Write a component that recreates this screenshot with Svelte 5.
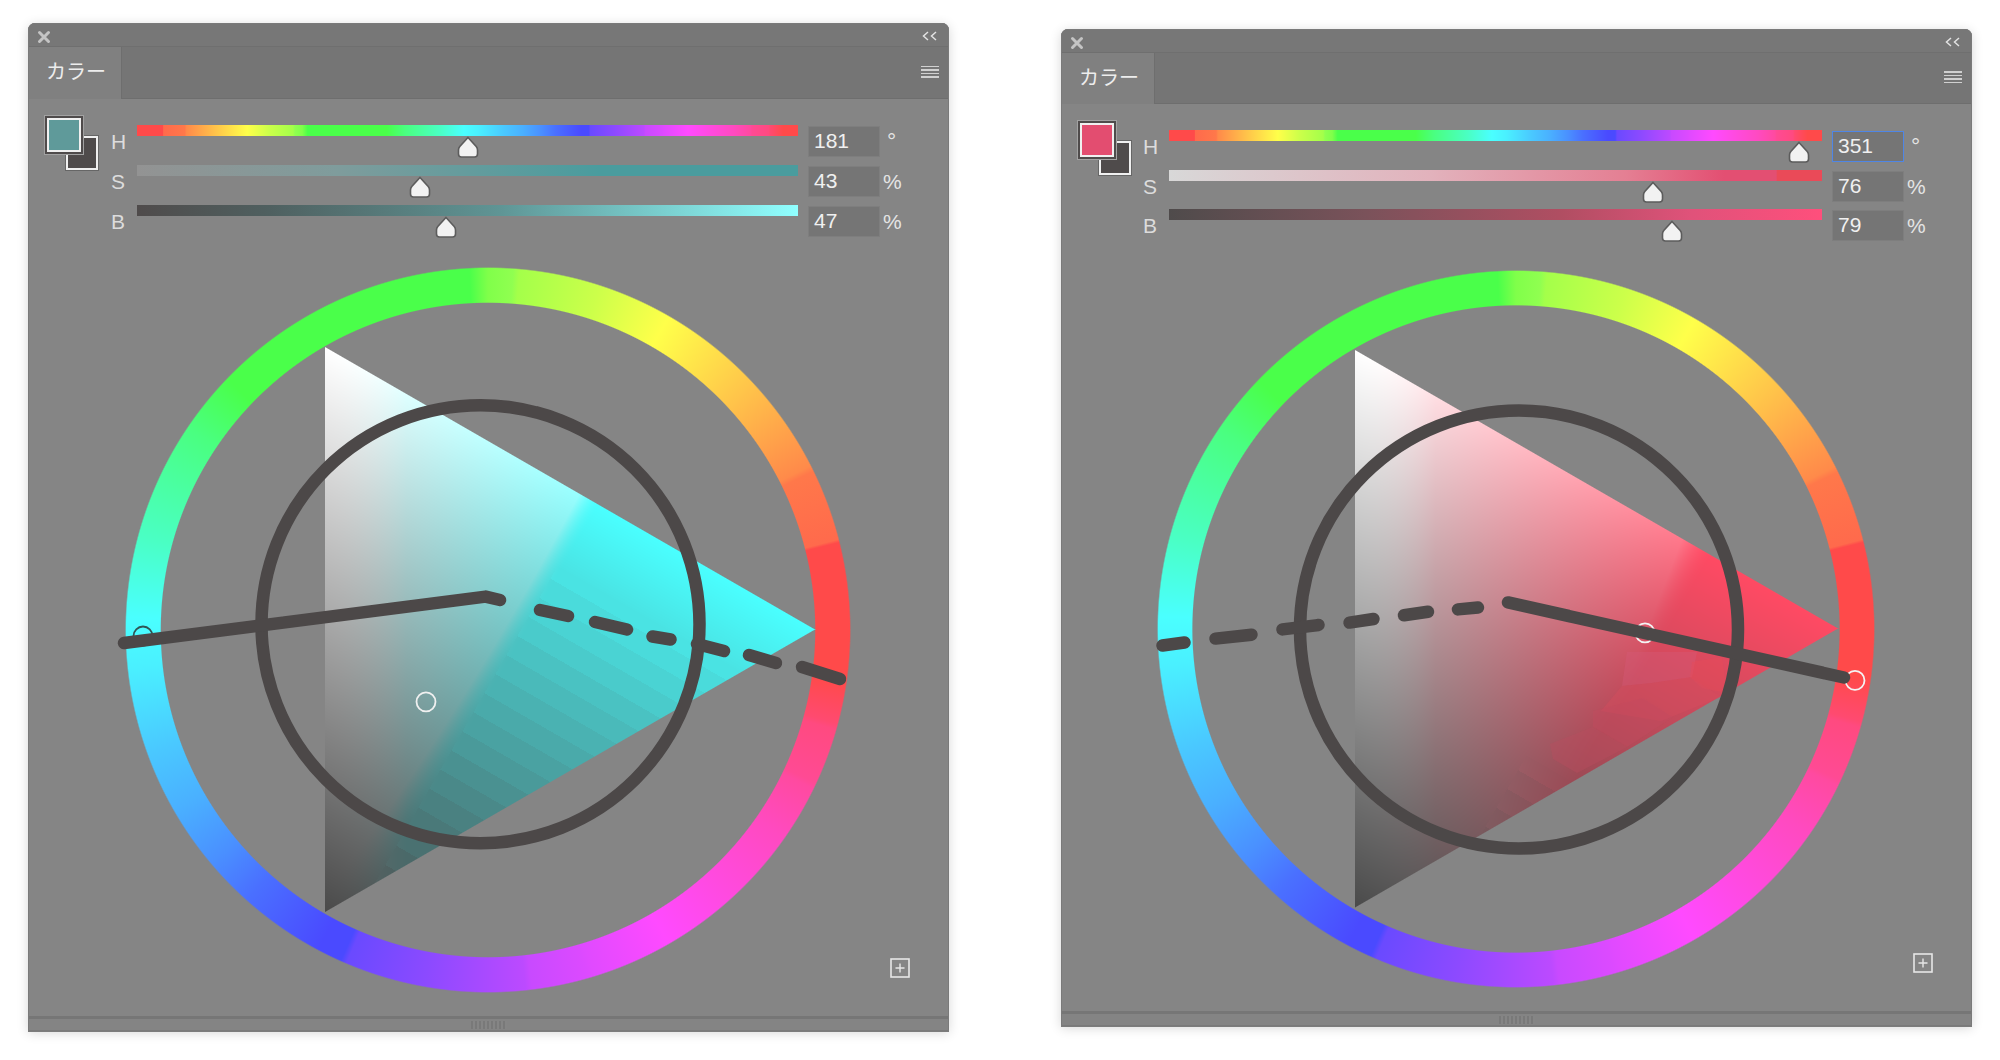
<script lang="ts">
	interface Slider {
		label: string;
		value: string;
		unit: string;
		gradient: string;
		thumb: number; // thumb centre, px from track start
		focused?: boolean;
	}

	interface Panel {
		width: number;
		height: number;
		marginTop: number;
		marginLeft: number;
		tabHeight: number;
		trackWidth: number;
		sliderLeft: number;
		rowGap: number;
		swatch: string;
		sliders: Slider[];
		// wheel coordinates are relative to the panel
		cx: number;
		cy: number;
		r: number;
		hue: number[]; // channel share of the pure hue, 0..1
		stripeFrom: number;
		satFrom: number;
		satTo: number;
		tri: number[][];
		cCx: number;
		cCy: number;
		cR: number;
		solid: number[][];
		dashes: number[][];
		dots: { x: number; y: number; color: string }[];
		patches: { points: string; color: string; opacity: number }[];
	}

	const WHEEL_TOP = 238;

	// hue position -> color, read off the reference wheel (it's stepped)
	const HUE_STOPS: [number, string][] = [
		[-8, '#ff4a4a'], [14, '#ff4a4a'], [14.5, '#ff6a4c'], [26, '#ff784a'], [27, '#ff8a4a'],
		[43, '#ffc44a'], [60, '#ffff4a'], [72, '#ccff4a'], [85, '#a4ff4a'], [86, '#90ff50'],
		[90, '#80ff4a'], [93, '#4aff4a'], [136, '#4aff4a'], [146, '#4aff80'], [165, '#4affc4'],
		[178, '#4affff'], [186, '#4af0ff'], [200, '#4ac8ff'], [210, '#4ab0ff'], [220, '#4a90ff'],
		[228, '#4a70ff'], [242, '#4a4aff'], [246, '#4a4aff'], [247, '#6a4aff'], [260, '#8c4aff'],
		[276, '#bc4aff'], [277, '#c84aff'], [286, '#dc4aff'], [287, '#e04aff'], [300, '#ff4aff'],
		[312, '#ff4ae0'], [325, '#ff4ac0'], [334, '#ff4aa0'], [335, '#ff4a94'], [344, '#ff4a80'],
		[345, '#ff4a70'], [352, '#ff4a4a'],
	];

	// hue runs counter-clockwise on the wheel, conic gradients clockwise
	const WHEEL = `conic-gradient(from 90deg, #ff4a4a 8deg, ${[...HUE_STOPS]
		.reverse()
		.map(([h, c]) => `${c} ${360 - h}deg`)
		.join(', ')})`;

	const HUE_BAR = `linear-gradient(90deg, ${HUE_STOPS.filter(([h]) => h >= 0)
		.map(([h, c]) => `${c} ${((h / 360) * 100).toFixed(2)}%`)
		.join(', ')}, #ff4a4a 100%)`;

	const panels: Panel[] = [
		{
			width: 921,
			height: 1008,
			marginTop: 23,
			marginLeft: 28,
			tabHeight: 51,
			trackWidth: 661,
			sliderLeft: 12,
			rowGap: 9,
			swatch: '#5f9a9a',
			sliders: [
				{ label: 'H', value: '181', unit: '°', gradient: HUE_BAR, thumb: 331 },
				{
					label: 'S',
					value: '43',
					unit: '%',
					gradient: 'linear-gradient(90deg, #939393, #7f9c9c 30%, #4a9c9e 70%, #4a9c9e)',
					thumb: 283,
				},
				{
					label: 'B',
					value: '47',
					unit: '%',
					gradient: 'linear-gradient(90deg, #4f4b4b, #4f6060 20%, #5f9595 55%, #80dcdc 85%, #90ffff)',
					thumb: 309,
				},
			],
			cx: 460,
			cy: 606.8,
			r: 363,
			hue: [0, 1, 1],
			stripeFrom: 0.15,
			satFrom: 0.47,
			satTo: 0.56,
			tri: [[297, 324], [787, 606.5], [297, 889]],
			cCx: 452.5,
			cCy: 601.2,
			cR: 219,
			solid: [[96, 620], [457.6, 573.6], [472, 577]],
			dashes: [
				[512, 587, 540, 593],
				[567, 599, 599, 606.5],
				[624.5, 613.5, 642.5, 616.5],
				[669, 621, 696, 628],
				[721, 632, 748, 640],
				[774, 644, 812, 656],
			],
			dots: [
				{ x: 115, y: 613, color: '#2f5555' },
				{ x: 398, y: 678.8, color: '#f0f0f0' },
			],
			patches: [],
		},
		{
			width: 911,
			height: 997,
			marginTop: 29,
			marginLeft: 112,
			tabHeight: 50,
			trackWidth: 653,
			sliderLeft: 11,
			rowGap: 8.5,
			swatch: '#e34d70',
			sliders: [
				{ label: 'H', value: '351', unit: '°', gradient: HUE_BAR, thumb: 630, focused: true },
				{
					label: 'S',
					value: '76',
					unit: '%',
					gradient: 'linear-gradient(90deg, #d8d8d8, #e2b2bc 40%, #e47f93 70%, #e34f72 85%, #e34f72 93%, #ea4a58 93.1%)',
					thumb: 484,
				},
				{
					label: 'B',
					value: '79',
					unit: '%',
					gradient: 'linear-gradient(90deg, #4f4b4b, #7a525a 30%, #b04e62 60%, #e0527a 80%, #ff4f7c)',
					thumb: 503,
				},
			],
			cx: 455,
			cy: 600,
			r: 359,
			hue: [1, 0, 0.14],
			stripeFrom: 0.55,
			satFrom: 0.55,
			satTo: 0.74,
			tri: [[294, 320.5], [777, 599], [294, 878]],
			cCx: 458,
			cCy: 600.5,
			cR: 219,
			solid: [[447, 573.4], [783, 648.5]],
			dashes: [
				[417, 578.5, 397, 580.4],
				[367, 582.8, 343, 586.3],
				[312.5, 590, 288.5, 593.6],
				[257.5, 596, 221.5, 600.4],
				[190.5, 605.7, 154.5, 609.6],
				[123.5, 613.5, 101.5, 616.5],
			],
			dots: [
				{ x: 584, y: 603.9, color: '#f4f4f4' },
				{ x: 794, y: 651.4, color: '#f4f4f4' },
			],
			// the blotchy posterized patches of this hue
			patches: [
				{ points: '566,623 636,623 631,648 591,654 561,657', color: '#d45a78', opacity: 0.4 },
				{ points: '631,633 661,628 666,664 641,659 629,648', color: '#e84a58', opacity: 0.4 },
				{ points: '561,657 591,654 629,648 660,668 600,692 540,682', color: '#d84e60', opacity: 0.4 },
				{ points: '532,682 582,669 612,688 566,718 532,698', color: '#c44a5e', opacity: 0.4 },
				{ points: '489,715 532,698 566,718 516,744 492,730', color: '#b84e5e', opacity: 0.4 },
			],
		},
	];

	const pts = (list: number[][]) => list.map((p) => p.join(',')).join(' ');

	const smooth = (a: number, b: number, x: number) => {
		const k = Math.min(1, Math.max(0, (x - a) / (b - a)));
		return k * k * (3 - 2 * k);
	};

	// Paints the hue triangle: brightness falls with the distance from the top
	// edge, saturation grows towards the tip, dark part is posterized in stripes.
	function paintTriangle(canvas: HTMLCanvasElement, p: Panel) {
		const [A, B, C] = p.tri;
		const ex = B[0] - A[0];
		const ey = B[1] - A[1];
		const w = ex + 1;
		const h = Math.ceil(C[1] - A[1]) + 1;
		canvas.width = w;
		canvas.height = h;
		const ctx = canvas.getContext('2d');
		if (!ctx) return;
		const img = ctx.createImageData(w, h);

		const len = Math.hypot(ex, ey);
		const height = (-ey * (C[0] - A[0]) + ex * (C[1] - A[1])) / len;
		const fx = C[0] - B[0];
		const fy = C[1] - B[1];
		const flen = Math.hypot(fx, fy);

		for (let py = 0; py < h; py++) {
			for (let px = 0; px < w; px++) {
				const x = px + 0.5;
				const y = py + 0.5;
				const upper = (-ey * x + ex * y) / len;
				const lower = (fx * (y - ey) - fy * (x - ex)) / flen;
				const alpha = Math.min(1, Math.max(0, Math.min(upper, lower, x) + 0.5));
				if (alpha <= 0) continue;

				const t = x / ex;
				const u = (x * ex + y * ey) / (len * len);
				let d = Math.max(0, upper / height);
				const sat = Math.min(1, t * 6) * Math.max(Math.min(1, t * (1.1 + 2 * d)), smooth(p.satFrom, p.satTo, u));
				if (u > p.satFrom + 0.08 && d > p.stripeFrom) d = Math.floor(d / 0.045) * 0.045 + 0.02;

				const high = 255 - 181 * d;
				const low = high + (74 - high) * sat;
				const i = (py * w + px) * 4;
				for (let c = 0; c < 3; c++) img.data[i + c] = low + (high - low) * p.hue[c];
				img.data[i + 3] = alpha * 255;
			}
		}
		ctx.putImageData(img, 0, 0);
	}
</script>

<div class="page">
	{#each panels as p}
		<section
			class="panel"
			style="width: {p.width}px; height: {p.height}px; margin: {p.marginTop}px 0 0 {p.marginLeft}px"
		>
			<header class="titlebar">
				<svg class="close" width="14" height="14" viewBox="0 0 14 14">
					<path d="M2.5 2.5 L11.5 11.5 M11.5 2.5 L2.5 11.5" stroke="#c4c4c4" stroke-width="3" stroke-linecap="round" />
				</svg>
				<svg class="collapse" width="16" height="10" viewBox="0 0 16 10">
					<path d="M6 1 L1.5 5 L6 9 M14 1 L9.5 5 L14 9" fill="none" stroke="#e2e2e2" stroke-width="1.5" />
				</svg>
			</header>

			<div class="tabbar" style="height: {p.tabHeight}px">
				<div class="tab">カラー</div>
				<div class="menu"><i></i><i></i><i></i><i></i></div>
			</div>

			<div class="body">
				<div class="controls" style="height: {WHEEL_TOP - 25 - p.tabHeight}px">
					<div class="swatches">
						<div class="swatch bg"><span></span></div>
						<div class="swatch fg"><span style="background: {p.swatch}"></span></div>
					</div>
					<div class="sliders" style="gap: {p.rowGap}px; margin-left: {p.sliderLeft}px">
						{#each p.sliders as s}
							<div class="row">
								<span class="label">{s.label}</span>
								<div class="track-wrap" style="width: {p.trackWidth}px">
									<div class="track" style="background: {s.gradient}"></div>
									<svg class="thumb" style="left: {s.thumb - 11}px" width="22" height="23" viewBox="0 0 22 23">
										<path
											d="M11 1.5 L19.2 10.5 Q20.5 12 20.5 14 V18 Q20.5 21 17.5 21 H4.5 Q1.5 21 1.5 18 V14 Q1.5 12 2.8 10.5 Z"
											fill="#f2f2f2"
											stroke="#5c5c5c"
											stroke-width="1.6"
										/>
									</svg>
								</div>
								<div class="field" class:focused={s.focused}>{s.value}</div>
								<span class="unit" class:deg={s.unit === '°'}>{s.unit}</span>
							</div>
						{/each}
					</div>
				</div>

				<div class="wheel-area" style="height: {p.height - 15 - WHEEL_TOP}px">
					<div
						class="ring"
						style="width: {p.r * 2}px; height: {p.r * 2}px; margin: {p.cy - p.r - WHEEL_TOP}px 0 0 {p.cx - p.r}px; background: {WHEEL}"
					></div>
					<canvas
						class="triangle"
						style="margin: {p.tri[0][1] - WHEEL_TOP}px 0 0 {p.tri[0][0]}px"
						use:paintTriangle={p}
					></canvas>
					<svg
						class="overlay"
						width={p.width}
						height={p.height - 15 - WHEEL_TOP}
						viewBox="0 {WHEEL_TOP} {p.width} {p.height - 15 - WHEEL_TOP}"
					>
						{#each p.patches as b}
							<polygon points={b.points} fill={b.color} opacity={b.opacity} />
						{/each}

						{#each p.dots as d}
							<circle cx={d.x} cy={d.y} r="9.5" fill="none" stroke={d.color} stroke-width="1.8" />
						{/each}

						<circle class="stroke" cx={p.cCx} cy={p.cCy} r={p.cR} />
						<polyline class="stroke" points={pts(p.solid)} />
						{#each p.dashes as d}
							<line class="stroke" x1={d[0]} y1={d[1]} x2={d[2]} y2={d[3]} />
						{/each}
					</svg>
				</div>

				<svg class="plus" width="20" height="20" viewBox="0 0 20 20">
					<rect x="1" y="1" width="18" height="18" fill="none" stroke="#e6e6e6" stroke-width="1.6" />
					<path d="M10 5.5 V14.5 M5.5 10 H14.5" stroke="#e6e6e6" stroke-width="1.4" />
				</svg>
			</div>

			<footer class="footer"><div class="grip"></div></footer>
		</section>
	{/each}
</div>

<style>
	:global(body) {
		background: #ffffff;
	}

	.page {
		display: flex;
		align-items: flex-start;
		width: 2000px;
		height: 1060px;
		overflow: hidden;
		font-family: 'Liberation Sans', 'Noto Sans CJK JP', sans-serif;
	}

	.panel {
		display: flex;
		flex-direction: column;
		flex: none;
		background: #858585;
		border-radius: 7px 7px 0 0;
		box-shadow: 0 2px 12px rgba(0, 0, 0, 0.16);
		outline: 1px solid #7a7a7a;
		outline-offset: -1px;
	}

	.titlebar {
		display: flex;
		align-items: center;
		justify-content: space-between;
		flex: none;
		height: 24px;
		padding: 4px 11px 0 9px;
		box-sizing: border-box;
		background: #777777;
		border-bottom: 1px solid #6f6f6f;
		border-radius: 7px 7px 0 0;
	}

	.collapse {
		margin-top: -2px;
	}

	.tabbar {
		display: flex;
		align-items: stretch;
		justify-content: space-between;
		flex: none;
		background: #757575;
		border-bottom: 1px solid #6e6e6e;
	}

	.tab {
		display: flex;
		align-items: center;
		width: 94px;
		margin-bottom: -1px;
		padding: 0 0 5px 18px;
		box-sizing: border-box;
		background: #808080;
		border-right: 1px solid #6e6e6e;
		color: #ededed;
		font-size: 20px;
		font-family: 'Noto Sans CJK JP', sans-serif;
	}

	.menu {
		display: flex;
		flex-direction: column;
		justify-content: center;
		gap: 2px;
		padding: 0 10px 2px 0;
	}

	.menu i {
		display: block;
		width: 18px;
		height: 1.5px;
		background: #d0d0d0;
	}

	.body {
		position: relative;
		flex: 1;
		min-height: 0;
	}

	.controls {
		display: flex;
		padding: 16px 0 0 16px;
		box-sizing: border-box;
	}

	.swatches {
		display: grid;
		grid-template-columns: 21px 19px 15px;
		grid-template-rows: 20px 20px 16px;
		width: 55px;
		height: 56px;
		flex: none;
	}

	.swatch {
		box-sizing: border-box;
		display: flex;
	}

	.swatch span {
		flex: 1;
		display: block;
		border: 2px solid #f0f0f0;
	}

	.swatch.fg {
		grid-area: 1 / 1 / 3 / 3;
		z-index: 1;
		background: #4f4b4b;
		padding: 2px;
		border: 1.5px solid #a2a2a2;
	}

	.swatch.bg {
		grid-area: 2 / 2 / 4 / 4;
		padding: 1px;
		background: #666;
	}

	.swatch.bg span {
		background: #4f4b4b;
	}

	.sliders {
		display: flex;
		flex-direction: column;
		margin-top: 10px;
	}

	.row {
		display: flex;
		align-items: flex-start;
		height: 31px;
	}

	.label {
		width: 26px;
		margin-top: 5px;
		color: #dcdcdc;
		font-size: 21px;
		line-height: 24px;
	}

	.track-wrap {
		position: relative;
		flex: none;
		height: 31px;
	}

	.track {
		height: 11px;
	}

	.thumb {
		position: absolute;
		top: 11px;
	}

	.field {
		width: 72px;
		height: 31px;
		margin: 1px 0 0 10px;
		padding-left: 5px;
		box-sizing: border-box;
		background: #757575;
		border: 1.5px solid #7e7e7e;
		color: #f0f0f0;
		font-size: 21px;
		line-height: 28px;
	}

	.field.focused {
		border: 1.5px solid #4f86e6;
	}

	.unit {
		margin: 2px 0 0 3px;
		width: 24px;
		color: #e4e4e4;
		font-size: 21px;
		line-height: 29px;
	}

	.unit.deg {
		margin-left: 7px;
		font-size: 23px;
	}

	.wheel-area {
		display: grid;
		grid-template-columns: 1fr;
		grid-template-rows: 1fr;
		justify-items: start;
		align-items: start;
	}

	.ring {
		grid-area: 1 / 1;
		-webkit-mask: radial-gradient(closest-side, transparent 90%, #000 90.3%, #000 99.6%, transparent 100%);
		mask: radial-gradient(closest-side, transparent 90%, #000 90.3%, #000 99.6%, transparent 100%);
	}

	.triangle {
		grid-area: 1 / 1;
		position: relative;
		display: block;
	}

	.overlay {
		grid-area: 1 / 1;
		position: relative;
		display: block;
	}

	.stroke {
		fill: none;
		stroke: #4c4848;
		stroke-width: 12.5;
		stroke-linecap: round;
		stroke-linejoin: round;
	}

	.plus {
		position: absolute;
		right: 39px;
		bottom: 38px;
	}

	.footer {
		flex: none;
		height: 12px;
		display: flex;
		justify-content: center;
		align-items: center;
		background: #848484;
		border-top: 3px solid #767676;
		border-bottom: 1px solid #7c7c7c;
		box-sizing: content-box;
		margin-bottom: -1px;
	}

	.grip {
		width: 36px;
		height: 8px;
		background: repeating-linear-gradient(90deg, #797979 0 2px, #858585 2px 4px);
	}
</style>
